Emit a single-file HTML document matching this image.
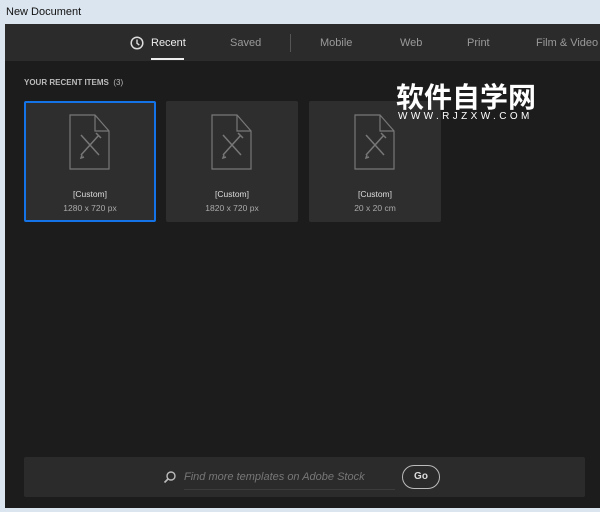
<!DOCTYPE html>
<html><head><style>
body{margin:0;width:600px;height:512px;overflow:hidden;background:#dbe5ef;font-family:"Liberation Sans",sans-serif;position:relative}
.t{position:absolute;left:6px;top:6px;font-size:11px;color:#111}
.hdr{position:absolute;left:5px;top:24px;width:595px;height:37px;background:#2b2b2b}
.main{position:absolute;left:5px;top:61px;width:595px;height:447px;background:#1c1c1c}
.tab{position:absolute;top:37px;font-size:11px;color:#9a9a9a}
.card{position:absolute;top:101px;width:132px;height:121px;background:#2e2e2e;border-radius:2px;text-align:center;color:#aaa;font-size:8px}
.card svg{position:absolute;left:45px;top:12px}
.card .a{position:absolute;top:88px;width:100%;color:#ddd;font-size:8.5px}
.card .b{position:absolute;top:102px;width:100%;font-size:8.5px}
</style></head><body>
<div class="t">New Document</div>
<div class="hdr"></div>
<div class="main"></div>
<svg style="position:absolute;left:130px;top:36px" width="14" height="14" viewBox="0 0 14 14"><circle cx="7" cy="7" r="5.8" fill="none" stroke="#ddd" stroke-width="1.5"/><path d="M7 3.5V7.3L9.3 9" fill="none" stroke="#ddd" stroke-width="1.4"/></svg>
<div class="tab" style="left:151px;color:#eee">Recent</div>
<div style="position:absolute;left:151px;top:58px;width:33px;height:2px;background:#eee"></div>
<div class="tab" style="left:230px">Saved</div>
<div style="position:absolute;left:290px;top:34px;width:1px;height:18px;background:#555"></div>
<div class="tab" style="left:320px">Mobile</div>
<div class="tab" style="left:400px">Web</div>
<div class="tab" style="left:467px">Print</div>
<div class="tab" style="left:536px">Film &amp; Video</div>
<div style="position:absolute;left:24px;top:78px;font-size:8px;font-weight:bold;color:#bbb">YOUR RECENT ITEMS <span style="font-weight:normal">&nbsp;(3)</span></div>
<div class="card" style="left:24px;box-shadow:inset 0 0 0 2px #1473e6"><svg width="42" height="58" viewBox="0 0 42 58"><path d="M1 2H26L40 18V56H1Z M26 2V18H40" fill="none" stroke="#777" stroke-width="1.2"/><path d="M12 22L30 42M30 22L12 42M15 44L12 45L13 42M27 20L32 25" fill="none" stroke="#777" stroke-width="1.5"/></svg><div class="a">[Custom]</div><div class="b">1280 x 720 px</div></div>
<div class="card" style="left:166px"><svg width="42" height="58" viewBox="0 0 42 58"><path d="M1 2H26L40 18V56H1Z M26 2V18H40" fill="none" stroke="#777" stroke-width="1.2"/><path d="M12 22L30 42M30 22L12 42M15 44L12 45L13 42M27 20L32 25" fill="none" stroke="#777" stroke-width="1.5"/></svg><div class="a">[Custom]</div><div class="b">1820 x 720 px</div></div>
<div class="card" style="left:309px"><svg width="42" height="58" viewBox="0 0 42 58"><path d="M1 2H26L40 18V56H1Z M26 2V18H40" fill="none" stroke="#777" stroke-width="1.2"/><path d="M12 22L30 42M30 22L12 42M15 44L12 45L13 42M27 20L32 25" fill="none" stroke="#777" stroke-width="1.5"/></svg><div class="a">[Custom]</div><div class="b">20 x 20 cm</div></div>
<div style="position:absolute;left:396px;top:81px;font-family:'Noto Sans CJK SC',sans-serif;font-weight:bold;font-size:28px;line-height:30px;color:#fff">软件自学网</div>
<div style="position:absolute;left:398px;top:111px;font-size:10px;color:#fff;letter-spacing:3.4px">WWW.RJZXW.COM</div>
<div style="position:absolute;left:24px;top:457px;width:561px;height:40px;background:#2b2b2b;border-radius:2px"></div>
<svg style="position:absolute;left:163px;top:470px" width="14" height="14" viewBox="0 0 14 14"><circle cx="8" cy="6" r="4" fill="none" stroke="#bbb" stroke-width="1.4"/><path d="M5 9L1.5 12.5" stroke="#bbb" stroke-width="1.6"/></svg>
<div style="position:absolute;left:184px;top:471px;font-size:11px;font-style:italic;color:#777">Find more templates on Adobe Stock</div>
<div style="position:absolute;left:184px;top:489px;width:211px;height:1px;background:#3c3c3c"></div>
<div style="position:absolute;left:402px;top:465px;width:36px;height:22px;border:1.5px solid #bbb;border-radius:12px;color:#ddd;font-size:10px;font-weight:bold;text-align:center;line-height:22px">Go</div>
</body></html>
